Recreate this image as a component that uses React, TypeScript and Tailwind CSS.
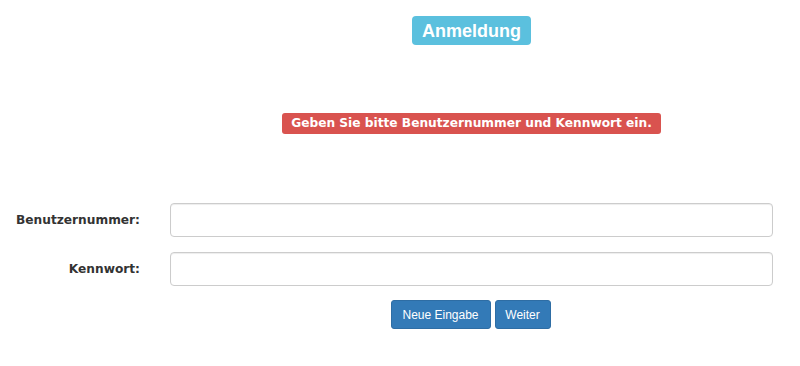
import React from "react";

export default function App() {
  return (
    <div className="w-[800px] h-[366px] bg-white text-[#333] font-['Liberation_Sans',Arial,sans-serif]">
      {/* Title */}
      <div className="flex pt-[16px]">
        <div className="w-[155px]" />
        <div className="flex-1 mr-[27px] ml-[15px] flex justify-center">
          <span className="inline-flex items-center h-[29px] px-[10px] rounded-[4px] bg-[#5bc0de] text-white text-[18px] font-bold leading-none">
            Anmeldung
          </span>
        </div>
      </div>

      {/* Hint */}
      <div className="flex mt-[68px]">
        <div className="w-[155px]" />
        <div className="flex-1 mr-[27px] ml-[15px] flex justify-center">
          <span className="inline-flex items-center h-[21px] px-[9px] rounded-[3px] bg-[#d9534f] text-white text-[12.2px] font-bold leading-none font-['DejaVu_Sans',Verdana,sans-serif]">
            Geben Sie bitte Benutzernummer und Kennwort ein.
          </span>
        </div>
      </div>

      {/* Form */}
      <form className="flex flex-col gap-[15px] mt-[69px]">
        <div className="flex items-center">
          <label className="w-[155px] pr-[15px] text-right text-[12.2px] font-bold text-[#333] font-['DejaVu_Sans',Verdana,sans-serif]">
            Benutzernummer:
          </label>
          <input
            type="text"
            className="flex-1 mr-[27px] ml-[15px] h-[34px] rounded-[4px] border border-[#ccc] shadow-[inset_0_1px_1px_rgba(0,0,0,0.075)] px-3 outline-none"
          />
        </div>
        <div className="flex items-center">
          <label className="w-[155px] pr-[15px] text-right text-[12.2px] font-bold text-[#333] font-['DejaVu_Sans',Verdana,sans-serif]">
            Kennwort:
          </label>
          <input
            type="password"
            className="flex-1 mr-[27px] ml-[15px] h-[34px] rounded-[4px] border border-[#ccc] shadow-[inset_0_1px_1px_rgba(0,0,0,0.075)] px-3 outline-none"
          />
        </div>
        <div className="flex -mt-[1px]">
          <div className="w-[155px]" />
          <div className="flex-1 mr-[28px] ml-[14px] flex justify-center gap-[4px]">
            <button
              type="button"
              className="h-[29px] w-[100px] rounded-[3px] border border-[#2e6da4] bg-[#337ab7] text-white text-[12px]"
            >
              Neue Eingabe
            </button>
            <button
              type="button"
              className="h-[29px] w-[56px] rounded-[3px] border border-[#2e6da4] bg-[#337ab7] text-white text-[12px]"
            >
              Weiter
            </button>
          </div>
        </div>
      </form>
    </div>
  );
}
